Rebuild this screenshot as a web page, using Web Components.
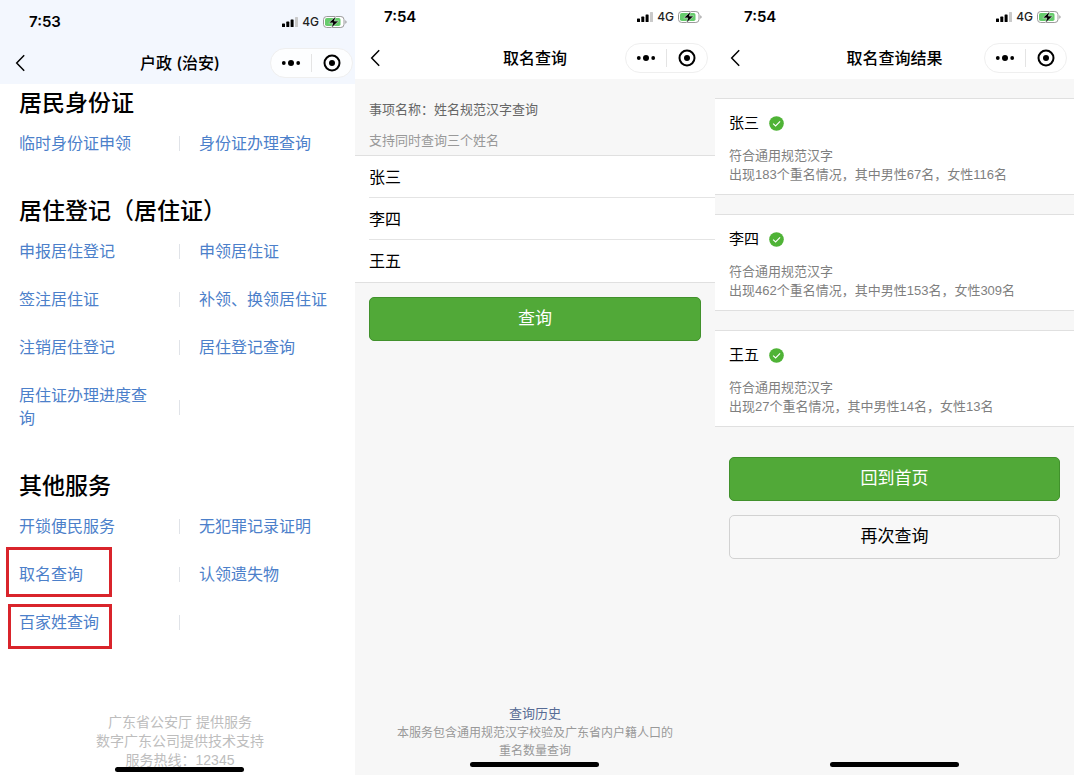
<!DOCTYPE html>
<html lang="zh-CN">
<head>
<meta charset="utf-8">
<meta name="viewport" content="width=device-width, initial-scale=1">
<title>取名查询</title>
<style>
  html { background: #fff; }
  body {
    margin: 0;
    font-family: "Liberation Sans", "Noto Sans CJK SC", sans-serif;
    color: #000;
  }
</style>
</head>
<body>
<name-app></name-app>

<script>
const define = (name, html, setup) => {
  const template = document.createElement('template');
  template.innerHTML = html;
  customElements.define(name, class extends HTMLElement {
    constructor() {
      super();
      this.attachShadow({ mode: 'open' }).append(template.content.cloneNode(true));
    }
    connectedCallback() {
      if (setup) setup(this, this.shadowRoot);
    }
  });
};

define('status-bar', `
<style>
  :host { display: flex; align-items: center; justify-content: space-between; height: 34px; padding: 0 12px 0 29px; }
  time { font: 600 15px/20px Inter, sans-serif; }
  .right { display: flex; align-items: center; }
  .net { font: 500 12px/16px Inter, sans-serif; margin: 0 4px; color: #222; }
  svg { display: block; }
</style>
<time><slot></slot></time>
<div class="right">
  <svg width="16" height="10" viewBox="0 0 16 10" aria-hidden="true">
    <rect x="0" y="6.5" width="3" height="3.5" rx=".6"/>
    <rect x="4.3" y="4.6" width="3" height="5.4" rx=".6"/>
    <rect x="8.6" y="2.4" width="3" height="7.6" rx=".6"/>
    <rect x="13" y="0" width="3" height="10" rx=".6" fill="#c9c9c9"/>
  </svg>
  <span class="net">4G</span>
  <svg width="25" height="14" viewBox="0 0 25 14" aria-hidden="true">
    <rect x=".5" y="1.5" width="20.5" height="11" rx="3.2" fill="#fff" stroke="#9a9a9a"/>
    <rect x="2" y="3" width="15.5" height="8" rx="1.8" fill="#66cc6c"/>
    <path d="M22.3 5.2v3.6c.8-.3 1.3-1 1.3-1.8s-.5-1.5-1.3-1.8z" fill="#9a9a9a"/>
    <path d="M12.8 1.2 5.8 7.9h4L8.4 13l7.2-6.9h-4.2z" stroke="#fff" stroke-width=".5"/>
  </svg>
</div>`);

define('nav-bar', `
<style>
  :host { display: grid; grid-template-columns: 1fr auto 1fr; align-items: center; height: 40px; margin-top: 4px; padding: 0 7px 0 13px; }
  button { display: grid; place-items: center; padding: 0; border: 0; background: none; color: #000; }
  h1 { margin: 0; padding-right: 6px; font: 500 16px/24px Inter, "Noto Sans CJK SC", sans-serif; }
  .back { width: 14px; height: 24px; }
  .capsule { box-sizing: border-box; justify-self: end; display: flex; align-items: center; width: 83px; height: 30px; border: 1px solid #efefef; border-radius: 15px; background: #fffc; }
  .capsule button { flex: 1; height: 28px; }
  i { width: 1px; height: 18px; background: #e4e4e4; }
</style>
<button class="back" type="button" aria-label="返回">
  <svg width="12" height="18" viewBox="0 0 12 18" fill="none" stroke="#000" stroke-width="1.5"><path d="M10.2 1.3 2.7 9l7.5 7.7"/></svg>
</button>
<h1><slot></slot></h1>
<div class="capsule">
  <button type="button" aria-label="更多">
    <svg width="20" height="8" viewBox="0 0 20 8"><circle cx="2.8" cy="4" r="1.9"/><circle cx="10" cy="4" r="3"/><circle cx="17.2" cy="4" r="1.9"/></svg>
  </button>
  <i></i>
  <button type="button" aria-label="关闭">
    <svg width="18" height="18" viewBox="0 0 18 18"><circle cx="9" cy="9" r="7.5" fill="none" stroke="#000" stroke-width="2"/><circle cx="9" cy="9" r="3"/></svg>
  </button>
</div>`);

define('phone-screen', `
<style>
  :host { display: flex; flex-direction: column; position: relative; background: #f7f7f7; }
  header { padding: var(--header-top, 0) 0 1px; background: var(--header-bg, #fff); }
  main { flex: 1; }
  footer { padding-bottom: var(--footer-space, 15px); }
  .home { position: absolute; left: 50%; bottom: var(--home-bottom, 8px); width: 129px; height: 5px; margin-left: -65px; border-radius: 3px; background: #000; }
</style>
<header>
  <status-bar></status-bar>
  <nav-bar></nav-bar>
</header>
<main><slot></slot></main>
<footer><slot name="footer"></slot></footer>
<div class="home"></div>`, (el, root) => {
  root.querySelector('status-bar').textContent = el.getAttribute('time');
  root.querySelector('nav-bar').textContent = el.getAttribute('heading');
});

define('service-group', `
<style>
  :host { display: block; }
  h2 { margin: 0; padding-left: 19px; font: 500 23px/34px "Noto Sans CJK SC", sans-serif; }
  .grid { display: grid; grid-template-columns: 1fr 1fr; padding-top: 2px; }
</style>
<h2></h2>
<div class="grid"><slot></slot></div>`, (el, root) => {
  root.querySelector('h2').textContent = el.getAttribute('heading');
});

define('service-link', `
<style>
  :host { display: flex; align-items: center; position: relative; box-sizing: border-box; min-height: 48px; padding: 12px 24px 13px 19px; font-size: 16px; line-height: 23px; }
  :host(:nth-child(odd))::after { content: ""; position: absolute; right: 0; top: calc(50% - 8px); width: 1px; height: 15px; background: #e0e3e8; }
  :host(:nth-child(even)) { padding-right: 8px; }
  a { color: #4c80ca; text-decoration: none; }
  .mark { display: none; position: absolute; box-sizing: border-box; border: 3px solid #d9242b; pointer-events: none; }
  :host([mark]) .mark { display: block; left: 6px; top: -4px; width: 106px; height: 50px; }
  :host([mark="low"]) .mark { left: 8px; top: 5px; width: 104px; height: 45px; }
</style>
<a href="#"><slot></slot></a>
<div class="mark"></div>`);

define('action-button', `
<style>
  :host { display: block; }
  button { display: block; box-sizing: border-box; width: 100%; height: 44px; padding: 0; border: 1px solid #41912c; border-radius: 5px; background: #51a938; color: #fff; font: 17px/24px "Liberation Sans", "Noto Sans CJK SC", sans-serif; }
  :host([plain]) button { border-color: #d2d2d2; background: #f8f8f8; color: #000; }
</style>
<button type="button"><slot></slot></button>`);

define('name-field', `
<style>
  :host { display: block; margin-left: 14px; }
  :host(:not(:last-child)) { border-bottom: 1px solid #e4e4e4; }
  :host(:last-child) input { height: 42px; }
  input { display: block; box-sizing: border-box; width: 100%; height: 41px; padding: 0 0 2px; border: 0; outline: 0; background: none; color: #000; font: 16px/24px "Liberation Sans", "Noto Sans CJK SC", sans-serif; }
</style>
<input type="text" aria-label="姓名">`, (el, root) => {
  root.querySelector('input').value = el.getAttribute('value');
});

define('result-card', `
<style>
  :host { display: block; margin-top: 19px; padding: 13px 14px 10px; border: solid #e0e0e0; border-width: 1px 0; background: #fff; }
  .name { display: flex; align-items: center; gap: 10px; margin-bottom: 12px; }
  h2 { margin: 0; font-weight: 400; font-size: 15px; line-height: 22px; }
  p { margin: 0; font-size: 13px; line-height: 19px; color: #7f7f7f; }
</style>
<div class="name">
  <h2></h2>
  <svg width="15" height="15" viewBox="0 0 15 15" role="img" aria-label="通过"><circle cx="7.5" cy="7.5" r="7.3" fill="#4fb336"/><path d="m4.1 7.6 2.5 2.4 4.5-4.6" fill="none" stroke="#fff" stroke-width="1.1"/></svg>
</div>
<p>符合通用规范汉字</p>
<p><slot></slot></p>`, (el, root) => {
  root.querySelector('h2').textContent = el.getAttribute('name');
});

define('name-app', `
<style>
  :host { display: grid; grid-template-columns: 355fr 360fr 359fr; box-sizing: border-box; min-height: 100vh; padding-bottom: 5px; }
  .services { --header-top: 5px; --header-bg: #f3f7fe; --home-bottom: 3px; --footer-space: 5px; margin-right: -5px; background: #fff; }
  service-group + service-group { margin-top: 24px; }
  .support { margin: 0; text-align: center; font-size: 14px; line-height: 19px; color: #bdbdbd; }
  .intro { display: grid; gap: 11px; padding: 21px 14px 4px; font-size: 13px; line-height: 20px; color: #999; }
  .intro p { margin: 0; }
  .intro .item { color: #666; }
  .fields { border: solid #e0e0e0; border-width: 1px 0; background: #fff; }
  .actions { display: grid; gap: 14px; padding: 14px 14px 0; }
  .result .actions { padding-top: 30px; }
  .about { padding: 0 40px; text-align: center; font-size: 12px; line-height: 18px; color: #999; }
  .about p { margin: 0; }
  .about a { display: block; font-size: 13px; line-height: 20px; color: #576b95; text-decoration: none; }
</style>
<phone-screen class="services" time="7:53" heading="户政 (治安)">
  <service-group heading="居民身份证">
    <service-link>临时身份证申领</service-link>
    <service-link>身份证办理查询</service-link>
  </service-group>
  <service-group heading="居住登记（居住证）">
    <service-link>申报居住登记</service-link>
    <service-link>申领居住证</service-link>
    <service-link>签注居住证</service-link>
    <service-link>补领、换领居住证</service-link>
    <service-link>注销居住登记</service-link>
    <service-link>居住登记查询</service-link>
    <service-link>居住证办理进度查询</service-link>
  </service-group>
  <service-group heading="其他服务">
    <service-link>开锁便民服务</service-link>
    <service-link>无犯罪记录证明</service-link>
    <service-link mark>取名查询</service-link>
    <service-link>认领遗失物</service-link>
    <service-link mark="low">百家姓查询</service-link>
  </service-group>
  <p class="support" slot="footer">广东省公安厅 提供服务<br>数字广东公司提供技术支持<br>服务热线：12345</p>
</phone-screen>

<phone-screen time="7:54" heading="取名查询">
  <div class="intro">
    <p class="item">事项名称：姓名规范汉字查询</p>
    <p>支持同时查询三个姓名</p>
  </div>
  <div class="fields">
    <name-field value="张三"></name-field>
    <name-field value="李四"></name-field>
    <name-field value="王五"></name-field>
  </div>
  <div class="actions"><action-button>查询</action-button></div>
  <div class="about" slot="footer">
    <a href="#">查询历史</a>
    <p>本服务包含通用规范汉字校验及广东省内户籍人口的<br>重名数量查询</p>
  </div>
</phone-screen>

<phone-screen class="result" time="7:54" heading="取名查询结果">
  <result-card name="张三">出现183个重名情况，其中男性67名，女性116名</result-card>
  <result-card name="李四">出现462个重名情况，其中男性153名，女性309名</result-card>
  <result-card name="王五">出现27个重名情况，其中男性14名，女性13名</result-card>
  <div class="actions">
    <action-button>回到首页</action-button>
    <action-button plain>再次查询</action-button>
  </div>
</phone-screen>`);
</script>
</body>
</html>
